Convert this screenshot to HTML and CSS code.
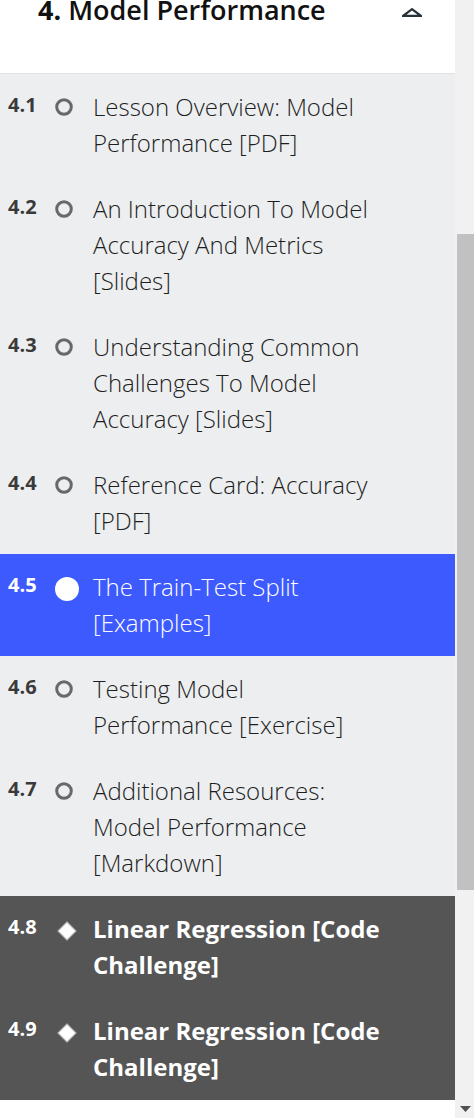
FILE: index.html
```html
<!DOCTYPE html>
<html lang="en">
<head>
<meta charset="utf-8">
<title>4. Model Performance</title>
<link rel="stylesheet" href="styles.css">
</head>
<body>
<div class="frame">
  <aside class="sidebar">
    <header class="module-head">
      <h2 class="module-title"><span class="module-num">4.</span> Model Performance</h2>
      <svg class="caret" width="20" height="9" viewBox="0 0 20 9" aria-hidden="true"><polygon points="10,1.2 18.8,7.8 1.2,7.8" fill="none" stroke="#263238" stroke-width="2.2" stroke-linejoin="miter"/></svg>
    </header>
    <ol class="lessons">
      <li class="lesson">
        <span class="num">4.1</span>
        <span class="icon"><svg width="18" height="18" viewBox="0 0 18 18"><circle cx="9" cy="9" r="7.3" fill="none" stroke="#686868" stroke-width="3"/></svg></span>
        <span class="text">Lesson Overview: Model Performance [PDF]</span>
      </li>
      <li class="lesson">
        <span class="num">4.2</span>
        <span class="icon"><svg width="18" height="18" viewBox="0 0 18 18"><circle cx="9" cy="9" r="7.3" fill="none" stroke="#686868" stroke-width="3"/></svg></span>
        <span class="text">An Introduction To Model Accuracy And Metrics [Slides]</span>
      </li>
      <li class="lesson">
        <span class="num">4.3</span>
        <span class="icon"><svg width="18" height="18" viewBox="0 0 18 18"><circle cx="9" cy="9" r="7.3" fill="none" stroke="#686868" stroke-width="3"/></svg></span>
        <span class="text">Understanding Common Challenges To Model Accuracy [Slides]</span>
      </li>
      <li class="lesson">
        <span class="num">4.4</span>
        <span class="icon"><svg width="18" height="18" viewBox="0 0 18 18"><circle cx="9" cy="9" r="7.3" fill="none" stroke="#686868" stroke-width="3"/></svg></span>
        <span class="text">Reference Card: Accuracy [PDF]</span>
      </li>
      <li class="lesson lesson-active">
        <span class="num">4.5</span>
        <span class="icon icon-dot"><svg width="24" height="24" viewBox="0 0 24 24"><circle cx="12" cy="12" r="12" fill="#ffffff"/></svg></span>
        <span class="text">The Train-Test Split [Examples]</span>
      </li>
      <li class="lesson">
        <span class="num">4.6</span>
        <span class="icon"><svg width="18" height="18" viewBox="0 0 18 18"><circle cx="9" cy="9" r="7.3" fill="none" stroke="#686868" stroke-width="3"/></svg></span>
        <span class="text">Testing Model Performance [Exercise]</span>
      </li>
      <li class="lesson">
        <span class="num">4.7</span>
        <span class="icon"><svg width="18" height="18" viewBox="0 0 18 18"><circle cx="9" cy="9" r="7.3" fill="none" stroke="#686868" stroke-width="3"/></svg></span>
        <span class="text">Additional Resources: Model Performance [Markdown]</span>
      </li>
      <li class="lesson lesson-challenge">
        <span class="num">4.8</span>
        <span class="icon icon-diamond"><svg width="22" height="22" viewBox="0 0 22 22"><rect x="4.5" y="4.5" width="13" height="13" transform="rotate(45 11 11)" fill="#ffffff" stroke="#a0a0a0" stroke-opacity="0.55" stroke-width="1.6"/></svg></span>
        <span class="text">Linear Regression [Code Challenge]</span>
      </li>
      <li class="lesson lesson-challenge">
        <span class="num">4.9</span>
        <span class="icon icon-diamond"><svg width="22" height="22" viewBox="0 0 22 22"><rect x="4.5" y="4.5" width="13" height="13" transform="rotate(45 11 11)" fill="#ffffff" stroke="#a0a0a0" stroke-opacity="0.55" stroke-width="1.6"/></svg></span>
        <span class="text">Linear Regression [Code Challenge]</span>
      </li>
    </ol>
  </aside>
  <div class="scrollbar" aria-hidden="true">
    <div class="track-top"></div>
    <div class="thumb"></div>
    <div class="track-rest"></div>
    <div class="arrow-down"><svg width="11" height="6" viewBox="0 0 11 6"><polygon points="0,0 11,0 5.5,6" fill="#505050"/></svg></div>
  </div>
</div>
</body>
</html>
```

FILE: styles.css
```css
* { box-sizing: border-box; }

html, body {
  margin: 0;
  padding: 0;
  background: #ffffff;
}

body {
  font-family: "Open Sans", "Liberation Sans", sans-serif;
  color: #222222;
}

.frame {
  display: flex;
  width: 474px;
  height: 1118px;
  overflow: hidden;
}

.sidebar {
  width: 455px;
  flex: 0 0 455px;
  background: #ffffff;
  display: flex;
  flex-direction: column;
}

.module-head {
  height: 74px;
  border-bottom: 1px solid #e1e2e4;
  display: flex;
  align-items: flex-start;
  justify-content: space-between;
  padding: 0 33px 0 38px;
  background: #ffffff;
}

.module-title {
  margin: -4px 0 0 0;
  font-size: 27px;
  line-height: 27px;
  font-weight: 600;
  color: #111111;
  white-space: nowrap;
}

.module-num {
  font-weight: 700;
}

.caret {
  display: block;
  margin-top: 8px;
}

.lessons {
  list-style: none;
  margin: 0;
  padding: 0;
}

.lesson {
  display: flex;
  align-items: flex-start;
  padding: 15px 0 15px 8px;
  background: #edeef0;
}

.num {
  width: 47px;
  flex: 0 0 47px;
  font-size: 20px;
  line-height: 32px;
  font-weight: 700;
  color: #3a3a3a;
}

.icon {
  width: 24px;
  flex: 0 0 24px;
  height: 36px;
  margin-right: 14px;
  display: flex;
  align-items: center;
}

.icon svg { display: block; }

.icon-dot {
  padding-top: 4px;
}

.icon-diamond {
  padding-top: 4px;
  justify-content: center;
}

.text {
  width: 290px;
  font-size: 24px;
  line-height: 36px;
  font-weight: 300;
  color: #1e1e1e;
}

.lesson-active {
  background: #3d5afe;
}

.lesson-active .num,
.lesson-active .text {
  color: #ffffff;
}

.lesson-challenge {
  background: #555555;
}

.lesson-challenge .num {
  color: #ffffff;
}

.lesson-challenge .text {
  color: #ffffff;
  font-weight: 700;
}

.scrollbar {
  width: 19px;
  flex: 0 0 19px;
  background: #f1f1f1;
  display: flex;
  flex-direction: column;
  padding-left: 2px;
}

.track-top {
  height: 234px;
  flex: 0 0 234px;
}

.thumb {
  height: 656px;
  flex: 0 0 656px;
  background: #c1c1c1;
}

.track-rest {
  flex: 1 1 auto;
}

.arrow-down {
  height: 17px;
  flex: 0 0 17px;
  display: flex;
  align-items: center;
  justify-content: center;
  padding-bottom: 2px;
}

.arrow-down svg { display: block; }
```
